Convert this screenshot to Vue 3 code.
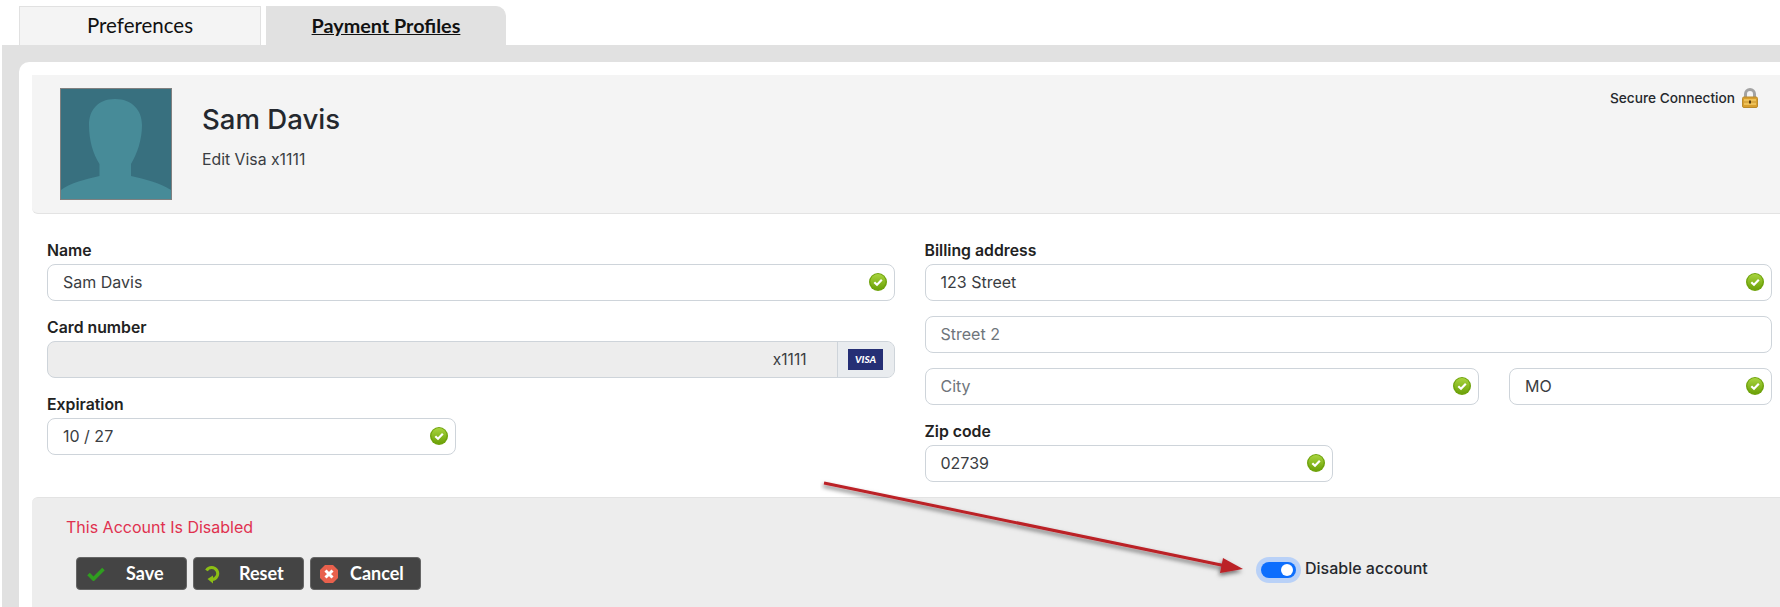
<script setup>
</script>

<template>
  <div class="page">
    <div class="tabs">
      <div class="tab">Preferences</div>
      <div class="tab active">Payment Profiles</div>
    </div>
    <div class="shell">
      <div class="panel">
        <header class="head">
          <svg class="avatar" viewBox="0 0 112 112" width="112" height="112">
            <rect x="0.5" y="0.5" width="111" height="111" fill="#38707f" stroke="#808080" />
            <path d="M55 11C38 11 29 22 29 37C29 52 33 66 39.5 76V88C26 91 10 95 1 102V111H111V102C100 95 85 91 71 88V76C77 66 82 52 82 37C82 22 72 11 55 11Z" fill="#478b98" />
          </svg>
          <div class="who">
            <h1>Sam Davis</h1>
            <p>Edit Visa x1111</p>
          </div>
          <div class="secure">
            <span>Secure Connection</span>
            <svg viewBox="0 0 16 20" width="16" height="20">
              <path d="M3.5 10V6a4.5 4.5 0 0 1 9 0v4" fill="none" stroke="#a3a3a3" stroke-width="3" />
              <rect x="0.5" y="9" width="15" height="10.5" rx="1.5" fill="#d99f2e" stroke="#b98a2c" />
              <rect x="2" y="11" width="12" height="6" fill="#edc158" />
              <path d="M2 14H14" stroke="#c58f28" stroke-width="1" />
              <rect x="7" y="12.5" width="2" height="3" fill="#5a3d10" />
            </svg>
          </div>
        </header>

        <div class="form">
          <div class="col">
            <label>Name</label>
            <div class="field mb">
              <span>Sam Davis</span>
              <svg class="ok" viewBox="0 0 18 18" width="18" height="18"><defs><linearGradient id="okg" x1="0" y1="0" x2="0" y2="1"><stop offset="0" stop-color="#a8d43e" /><stop offset="1" stop-color="#6ea30a" /></linearGradient></defs><circle cx="9" cy="9" r="9" fill="#6fa30c" /><circle cx="9" cy="8.6" r="7.6" fill="url(#okg)" /><path d="M5.3 9.2L8 11.8L12.8 6.8" fill="none" stroke="#fff" stroke-width="2.2" /></svg>
            </div>
            <label>Card number</label>
            <div class="card mb">
              <div class="card-num">x1111</div>
              <div class="card-brand"><span class="visa">VISA</span></div>
            </div>
            <label>Expiration</label>
            <div class="field exp">
              <span>10 / 27</span>
              <svg class="ok" viewBox="0 0 18 18" width="18" height="18"><circle cx="9" cy="9" r="9" fill="#6fa30c" /><circle cx="9" cy="8.6" r="7.6" fill="url(#okg)" /><path d="M5.3 9.2L8 11.8L12.8 6.8" fill="none" stroke="#fff" stroke-width="2.2" /></svg>
            </div>
          </div>
          <div class="col">
            <label>Billing address</label>
            <div class="field gap">
              <span>123 Street</span>
              <svg class="ok" viewBox="0 0 18 18" width="18" height="18"><circle cx="9" cy="9" r="9" fill="#6fa30c" /><circle cx="9" cy="8.6" r="7.6" fill="url(#okg)" /><path d="M5.3 9.2L8 11.8L12.8 6.8" fill="none" stroke="#fff" stroke-width="2.2" /></svg>
            </div>
            <div class="field gap"><span class="ph">Street 2</span></div>
            <div class="row mb">
              <div class="field city">
                <span class="ph">City</span>
                <svg class="ok" viewBox="0 0 18 18" width="18" height="18"><circle cx="9" cy="9" r="9" fill="#6fa30c" /><circle cx="9" cy="8.6" r="7.6" fill="url(#okg)" /><path d="M5.3 9.2L8 11.8L12.8 6.8" fill="none" stroke="#fff" stroke-width="2.2" /></svg>
              </div>
              <div class="field state">
                <span>MO</span>
                <svg class="ok" viewBox="0 0 18 18" width="18" height="18"><circle cx="9" cy="9" r="9" fill="#6fa30c" /><circle cx="9" cy="8.6" r="7.6" fill="url(#okg)" /><path d="M5.3 9.2L8 11.8L12.8 6.8" fill="none" stroke="#fff" stroke-width="2.2" /></svg>
              </div>
            </div>
            <label>Zip code</label>
            <div class="field short">
              <span>02739</span>
              <svg class="ok" viewBox="0 0 18 18" width="18" height="18"><circle cx="9" cy="9" r="9" fill="#6fa30c" /><circle cx="9" cy="8.6" r="7.6" fill="url(#okg)" /><path d="M5.3 9.2L8 11.8L12.8 6.8" fill="none" stroke="#fff" stroke-width="2.2" /></svg>
            </div>
          </div>
        </div>

        <footer class="foot">
          <div class="left">
            <div class="warn">This Account Is Disabled</div>
            <div class="btns">
              <button class="btn save">
                <svg viewBox="0 0 18 14" width="18" height="14"><path d="M1.5 7L6.5 12L16.5 2" fill="none" stroke="#2f9e1f" stroke-width="3.6" /></svg>
                <span>Save</span>
              </button>
              <button class="btn reset">
                <svg viewBox="0 0 16 20" width="16" height="20"><path d="M2.5 6.5A6 6 0 1 1 8 15.5" fill="none" stroke="#8cbf14" stroke-width="3" /><path d="M3.5 15L9 11.5V19.5Z" fill="#8cbf14" /></svg>
                <span>Reset</span>
              </button>
              <button class="btn cancel">
                <svg viewBox="0 0 20 20" width="20" height="20"><path d="M6 1H14L19 6V14L14 19H6L1 14V6Z" fill="#e8604c" /><path d="M6.5 6.5L13.5 13.5M13.5 6.5L6.5 13.5" stroke="#fff" stroke-width="3" /></svg>
                <span>Cancel</span>
              </button>
            </div>
          </div>
          <div class="toggle-wrap">
            <div class="toggle"><i></i></div>
            <span>Disable account</span>
          </div>
        </footer>
      </div>
    </div>
    <svg class="arrow" width="460" height="120" viewBox="820 475 460 120">
      <defs>
        <filter id="sh" x="-5%" y="-20%" width="110%" height="150%"><feDropShadow dx="-1" dy="2.5" stdDeviation="2" flood-color="#000" flood-opacity="0.55" /></filter>
      </defs>
      <g filter="url(#sh)">
        <path d="M824 483L1226 566" fill="none" stroke="#bb2028" stroke-width="3" />
        <path d="M1243 569L1223 558L1220 573Z" fill="#bb2028" />
      </g>
    </svg>
  </div>
</template>

<style scoped>
.page {
  position: relative;
  width: 1780px;
  height: 607px;
  overflow: hidden;
  background: #fff;
  color: #25282d;
  font-family: Inter, "Open Sans", sans-serif;
}
.tabs {
  display: flex;
  gap: 5px;
  padding: 6px 0 0 19px;
  height: 45px;
  box-sizing: border-box;
  font-family: Lato, sans-serif;
}
.tab {
  width: 242px;
  height: 39px;
  box-sizing: border-box;
  background: #f4f4f4;
  border: 1px solid #e1e1e1;
  border-bottom: 0;
  font-size: 20.5px;
  line-height: 36px;
  text-align: center;
  color: #111;
}
.tab.active {
  width: 240px;
  background: #e1e1e1;
  border-radius: 0 10px 0 0;
  font-size: 19.8px;
  font-weight: 700;
  text-decoration: underline;
}
.shell {
  margin-left: 2px;
  height: 562px;
  padding: 17px 0 0 17px;
  box-sizing: border-box;
  background: #e1e1e1;
}
.panel {
  height: 545px;
  padding: 13px 0 0 13px;
  box-sizing: border-box;
  background: #fff;
  border-radius: 10px 0 0 0;
}
.head {
  display: flex;
  height: 139px;
  padding: 13px 22px 0 28px;
  box-sizing: border-box;
  background: #f4f4f4;
  border-bottom: 1px solid #e3e3e3;
  border-radius: 0 0 0 6px;
}
.avatar {
  flex: none;
}
.who {
  margin-left: 30px;
  padding-top: 14px;
}
h1 {
  margin: 0;
  font-size: 27.6px;
  font-weight: 500;
  line-height: 34px;
  color: #24282e;
}
p {
  margin: 14px 0 0;
  font-size: 15.8px;
  line-height: 20px;
  color: #3a3d42;
}
.secure {
  margin-left: auto;
  display: flex;
  align-items: flex-start;
  gap: 7px;
  font-size: 13.7px;
  line-height: 20px;
  font-weight: 500;
}
.form {
  display: flex;
  gap: 30px;
  padding: 26px 8px 0 15px;
  height: 283px;
  box-sizing: border-box;
}
.col {
  flex: 1;
}
label {
  display: block;
  font-size: 15.8px;
  font-weight: 600;
  line-height: 21px;
  height: 24px;
  color: #222;
}
.field {
  display: flex;
  align-items: center;
  justify-content: space-between;
  height: 37px;
  padding: 0 7px 1px 15px;
  box-sizing: border-box;
  background: #fff;
  border: 1px solid #ced4da;
  border-radius: 8px;
  font-size: 16px;
  color: #3a3d42;
}
.mb { margin-bottom: 16px; }
.gap { margin-bottom: 15px; }
.short { width: 408px; }
.exp { width: 409px; }
.ph { color: #6f757b; }
.ok { flex: none; }
.card {
  display: flex;
  height: 37px;
  box-sizing: border-box;
  background: #ededed;
  border: 1px solid #ced4da;
  border-radius: 8px;
  overflow: hidden;
  font-size: 15.5px;
}
.card-num {
  flex: 1;
  line-height: 35px;
  text-align: right;
  padding-right: 30px;
  color: #3a3d42;
}
.card-brand {
  width: 56px;
  display: flex;
  align-items: center;
  justify-content: center;
  background: #e9ecef;
  border-left: 1px solid #ced4da;
}
.visa {
  width: 35px;
  height: 21px;
  background: #252f75;
  color: #fff;
  font-family: Lato, sans-serif;
  font-size: 10px;
  font-weight: 900;
  font-style: italic;
  line-height: 21px;
  text-align: center;
}
.row {
  display: flex;
  gap: 30px;
}
.city { flex: 1; }
.state { width: 263px; }
.foot {
  display: flex;
  height: 110px;
  background: #ededed;
  border-top: 1px solid #e3e3e3;
  border-radius: 6px 0 0 0;
  box-sizing: border-box;
  padding: 19px 0 0 34px;
}
.warn {
  font-size: 16px;
  line-height: 20px;
  color: #e0314f;
}
.btns {
  display: flex;
  gap: 6px;
  margin: 20px 0 0 10px;
}
.btn {
  display: flex;
  align-items: center;
  width: 111px;
  height: 33px;
  padding: 0 0 0 10px;
  border: 1px solid #666;
  border-radius: 4px;
  background: #444;
  color: #fff;
  font-family: Lato, sans-serif;
  font-size: 18px;
  font-weight: 700;
}
.btn span { margin-bottom: 2px; }
.save { gap: 21px; }
.reset { gap: 19px; }
.cancel { gap: 11px; padding-left: 8px; }
.toggle-wrap {
  display: flex;
  align-items: center;
  gap: 9px;
  height: 26px;
  margin: 40px 0 0 835px;
  font-size: 16px;
  font-weight: 500;
}
.toggle-wrap span {
  margin-bottom: 4px;
}
.toggle {
  position: relative;
  width: 35px;
  height: 16px;
  margin-left: 5px;
  background: #0d6efd;
  border-radius: 8px;
  box-shadow: 0 0 0 5px #b9d1f7;
}
.toggle i {
  position: absolute;
  right: 3px;
  top: 2px;
  width: 12px;
  height: 12px;
  border-radius: 50%;
  background: #fff;
}
.arrow {
  position: absolute;
  left: 820px;
  top: 475px;
  pointer-events: none;
}
</style>
